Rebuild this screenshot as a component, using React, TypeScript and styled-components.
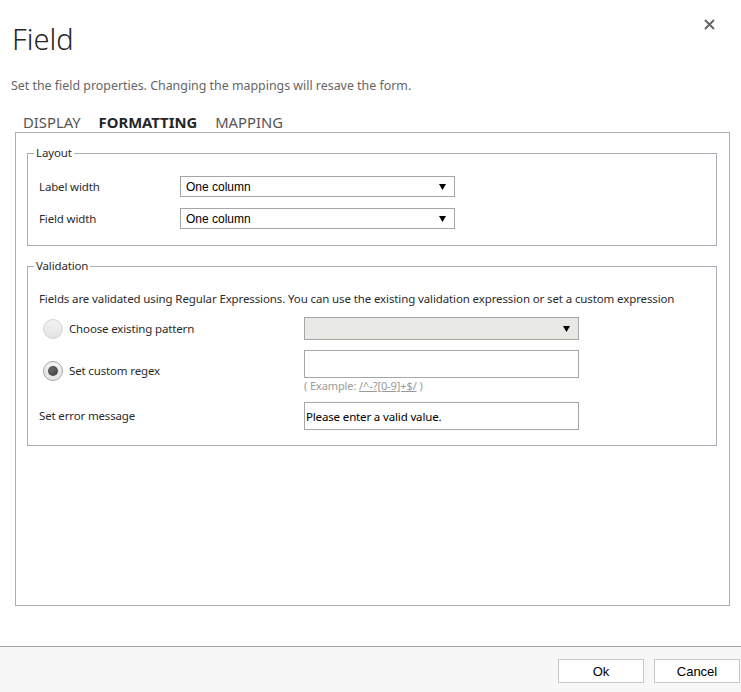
import styled, { createGlobalStyle } from 'styled-components';

const GlobalStyle = createGlobalStyle`
  html, body { margin: 0; padding: 0; background: #fff; }
  body { font-family: 'Noto Sans', 'Open Sans', sans-serif; color: #333; }
  * { box-sizing: border-box; }
`;

const Dialog = styled.div`
  width: 741px;
  height: 692px;
  display: flex;
  flex-direction: column;
  overflow: hidden;
  background: #fff;
`;

const Header = styled.div`
  display: flex;
  justify-content: space-between;
  align-items: flex-start;
  padding: 0 26px 0 12px;
`;

const Title = styled.h1`
  margin: 21px 0 0;
  font-size: 29px;
  font-weight: 300;
  line-height: 36px;
  color: #262626;
`;

const CloseBtn = styled.button`
  margin-top: 19px;
  padding: 0;
  border: none;
  background: none;
  width: 11px;
  height: 11px;
  display: flex;
  cursor: pointer;
`;

const Subtitle = styled.p`
  margin: 21px 0 0 11px;
  font-size: 12.4px;
  line-height: 16px;
  color: #666;
`;

const TabRow = styled.div`
  display: flex;
  gap: 18px;
  margin-top: 19px;
  padding-left: 23px;
  height: 19px;
`;

const Tab = styled.span<{ $active?: boolean }>`
  font-size: 14.8px;
  line-height: 19px;
  text-transform: uppercase;
  font-weight: ${(p) => (p.$active ? 700 : 400)};
  color: ${(p) => (p.$active ? '#262626' : '#555')};
  cursor: pointer;
`;

const Panel = styled.div`
  margin: 0 11px 0 15px;
  height: 474px;
  border: 1px solid #a9aeb6;
  padding: 12px 12px 0 11px;
  display: flex;
  flex-direction: column;
  gap: 12px;
`;

const Group = styled.fieldset`
  margin: 0;
  padding: 0;
  min-width: 0;
  border: 1px solid #a9aeb6;
`;

const Legend = styled.legend`
  margin-left: 6px;
  padding: 0 2px;
  font-size: 11.5px;
  letter-spacing: -0.15px;
  line-height: 16px;
  color: #2b2b2b;
`;

const FormGrid = styled.div<{ $labelCol: number; $top: number; $bottom: number; $gap: number }>`
  display: grid;
  grid-template-columns: ${(p) => p.$labelCol}px 275px 1fr;
  align-items: center;
  row-gap: ${(p) => p.$gap}px;
  padding: ${(p) => p.$top}px 11px ${(p) => p.$bottom}px 11px;
`;

const Label = styled.span`
  grid-column: 1;
  font-size: 11.5px;
  letter-spacing: -0.15px;
  line-height: 16px;
  color: #2b2b2b;
`;

const Description = styled.p`
  grid-column: 1 / -1;
  margin: 0;
  font-size: 11.5px;
  letter-spacing: -0.12px;
  line-height: 16px;
  color: #2b2b2b;
  white-space: nowrap;
`;

const SelectBox = styled.div<{ $disabled?: boolean; $height: number }>`
  grid-column: 2;
  height: ${(p) => p.$height}px;
  border: 1px solid #a6a6a6;
  background: ${(p) => (p.$disabled ? '#e8e8e4' : '#fff')};
  display: flex;
  align-items: center;
  justify-content: space-between;
  padding: 0 8px 0 5px;
  font-family: 'Liberation Sans', Arial, sans-serif;
  font-size: 12px;
  color: #000;
`;

const TextBox = styled.div`
  grid-column: 2;
  height: 28px;
  border: 1px solid #a6a6a6;
  background: #fff;
  display: flex;
  align-items: center;
  padding: 0 1px;
  font-size: 11.5px;
  letter-spacing: -0.15px;
  color: #000;
`;

const RadioOption = styled.label`
  grid-column: 1;
  display: flex;
  align-items: center;
  gap: 6px;
  padding-left: 4px;
  font-size: 11.5px;
  letter-spacing: -0.15px;
  line-height: 16px;
  color: #2b2b2b;
`;

const RadioCircle = styled.span<{ $checked?: boolean }>`
  width: 20px;
  height: 20px;
  border-radius: 50%;
  border: 1px solid ${(p) => (p.$checked ? '#a5a5a5' : '#d3d3d3')};
  background: linear-gradient(#f2f2f2, #e3e3e3);
  display: flex;
  align-items: center;
  justify-content: center;
  flex-shrink: 0;

  &::after {
    content: '';
    display: ${(p) => (p.$checked ? 'block' : 'none')};
    width: 10px;
    height: 10px;
    border-radius: 50%;
    background: radial-gradient(circle at 40% 35%, #666, #3c3c3c);
  }
`;

const ControlStack = styled.div`
  grid-column: 2;
  display: flex;
  flex-direction: column;
`;

const Example = styled.span`
  margin-top: 2px;
  font-size: 11px;
  letter-spacing: -0.1px;
  line-height: 12px;
  color: #9a9a9a;

  u { color: #9a9a9a; }
`;

const Footer = styled.div`
  margin-top: auto;
  height: 46px;
  border-top: 1px solid #a0a0a0;
  background: #f7f7f7;
  display: flex;
  justify-content: flex-end;
  align-items: flex-start;
  gap: 10px;
  padding: 12px 1px 0 0;
`;

const Button = styled.button`
  width: 86px;
  height: 24px;
  border: 1px solid #c8c8c8;
  background: #fff;
  font-family: 'Liberation Sans', Arial, sans-serif;
  font-size: 13px;
  color: #000;
  padding: 0;
  cursor: pointer;
`;

function Arrow() {
  return (
    <svg width="7" height="7" viewBox="0 0 7 7">
      <path d="M0 1h7L3.5 7z" fill="#000" />
    </svg>
  );
}

export default function App() {
  return (
    <Dialog>
      <GlobalStyle />
      <Header>
        <Title>Field</Title>
        <CloseBtn aria-label="Close">
          <svg width="11" height="11" viewBox="0 0 11 11">
            <path d="M1 1l9 9M10 1l-9 9" stroke="#666" strokeWidth="2" />
          </svg>
        </CloseBtn>
      </Header>
      <Subtitle>Set the field properties. Changing the mappings will resave the form.</Subtitle>
      <TabRow>
        <Tab>Display</Tab>
        <Tab $active>Formatting</Tab>
        <Tab>Mapping</Tab>
      </TabRow>

      <Panel>
        <Group>
          <Legend>Layout</Legend>
          <FormGrid $labelCol={141} $top={15} $bottom={16} $gap={11}>
            <Label>Label width</Label>
            <SelectBox $height={21}>
              One column
              <Arrow />
            </SelectBox>
            <Label>Field width</Label>
            <SelectBox $height={21}>
              One column
              <Arrow />
            </SelectBox>
          </FormGrid>
        </Group>

        <Group>
          <Legend>Validation</Legend>
          <FormGrid $labelCol={265} $top={17} $bottom={15} $gap={10}>
            <Description>
              Fields are validated using Regular Expressions. You can use the existing validation expression or set a custom expression
            </Description>
            <RadioOption>
              <RadioCircle />
              Choose existing pattern
            </RadioOption>
            <SelectBox $disabled $height={23}>
              <span />
              <Arrow />
            </SelectBox>
            <RadioOption>
              <RadioCircle $checked />
              Set custom regex
            </RadioOption>
            <ControlStack>
              <TextBox />
              <Example>
                ( Example: <u>/^-?[0-9]+$/</u> )
              </Example>
            </ControlStack>
            <Label>Set error message</Label>
            <TextBox>Please enter a valid value.</TextBox>
          </FormGrid>
        </Group>
      </Panel>

      <Footer>
        <Button>Ok</Button>
        <Button>Cancel</Button>
      </Footer>
    </Dialog>
  );
}
